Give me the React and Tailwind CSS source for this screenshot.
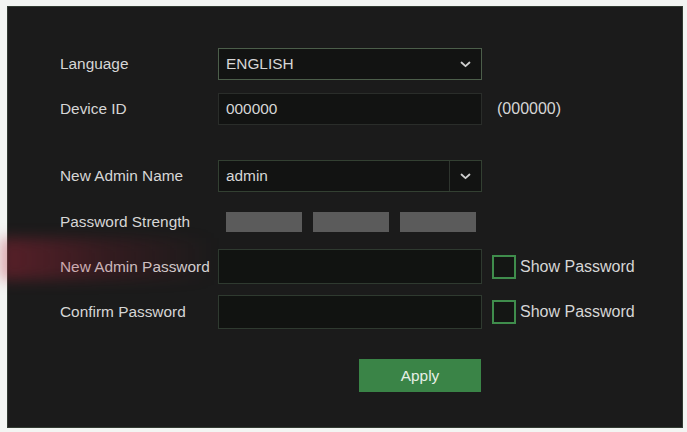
import React from 'react';

const Chevron = () => (
  <svg width="11" height="7" viewBox="0 0 11 7" fill="none">
    <path d="M1.5 1.5 L5.5 5.2 L9.5 1.5" stroke="#cfcfcf" strokeWidth="1.8" strokeLinecap="round" strokeLinejoin="round" />
  </svg>
);

const Label = ({ children }) => (
  <div className="w-[158px] shrink-0 whitespace-nowrap">{children}</div>
);

const ShowPassword = () => (
  <div className="flex items-center ml-[10px]">
    <div className="w-[24px] h-[24px] border-2 border-[#3f8d4c] bg-[#141614]"></div>
    <span className="ml-[4px] text-[16px]">Show Password</span>
  </div>
);

export default function App() {
  return (
    <div className="relative w-[687px] h-[432px] overflow-hidden bg-[#f3f5f3] pt-[6px] pl-[7px]">
      <div
        className="w-[676px] h-[422px] bg-[#1b1b1b] border border-[#323b32] pt-[41px] pl-[52px] text-[15.4px] text-[#d6d6d6]"
        style={{ fontFamily: '"Liberation Sans", Arial, sans-serif' }}
      >
        {/* Language */}
        <div className="flex items-center h-[32px]">
          <Label>Language</Label>
          <div className="w-[264px] h-[32px] border border-[#4c5e4a] bg-[#121312] flex items-center justify-between pl-[7px] pr-[10px]">
            <span>ENGLISH</span>
            <Chevron />
          </div>
        </div>

        {/* Device ID */}
        <div className="flex items-center h-[32px] mt-[13px]">
          <Label>Device ID</Label>
          <div className="w-[264px] h-[32px] border border-[#2a2d2a] bg-[#121312] flex items-center pl-[7px]">
            <span>000000</span>
          </div>
          <span className="ml-[15px] text-[16px]">(000000)</span>
        </div>

        {/* New Admin Name */}
        <div className="flex items-center h-[32px] mt-[35px]">
          <Label>New Admin Name</Label>
          <div className="w-[264px] h-[32px] border border-[#334032] bg-[#121312] flex items-center">
            <span className="flex-1 pl-[7px]">admin</span>
            <div className="w-[32px] h-full border-l border-[#2e352e] flex items-center justify-center">
              <Chevron />
            </div>
          </div>
        </div>

        {/* Password Strength */}
        <div className="flex items-center h-[20px] mt-[20px]">
          <Label>Password Strength</Label>
          <div className="flex gap-[11px] ml-[8px]">
            <div className="w-[76px] h-[20px] bg-[#5b5b5b]"></div>
            <div className="w-[76px] h-[20px] bg-[#5b5b5b]"></div>
            <div className="w-[76px] h-[20px] bg-[#5b5b5b]"></div>
          </div>
        </div>

        {/* New Admin Password */}
        <div className="flex items-center h-[35px] mt-[17px]">
          <Label>New Admin Password</Label>
          <div className="w-[264px] h-[35px] border border-[#2f3a30] bg-[#111311]"></div>
          <ShowPassword />
        </div>

        {/* Confirm Password */}
        <div className="flex items-center h-[34px] mt-[11px]">
          <Label>Confirm Password</Label>
          <div className="w-[264px] h-[34px] border border-[#2f3a30] bg-[#111311]"></div>
          <ShowPassword />
        </div>

        <button className="mt-[30px] ml-[299px] w-[122px] h-[33px] bg-[#3a8447] text-[#e6efe6] flex items-center justify-center">
          Apply
        </button>
      </div>

      {/* reddish glare on the left */}
      <div className="pointer-events-none absolute left-0 top-[238px] w-[215px] h-[42px] bg-linear-to-r from-[rgba(190,40,64,0.38)] via-[rgba(150,30,50,0.2)] to-transparent blur-[7px]"></div>
    </div>
  );
}
